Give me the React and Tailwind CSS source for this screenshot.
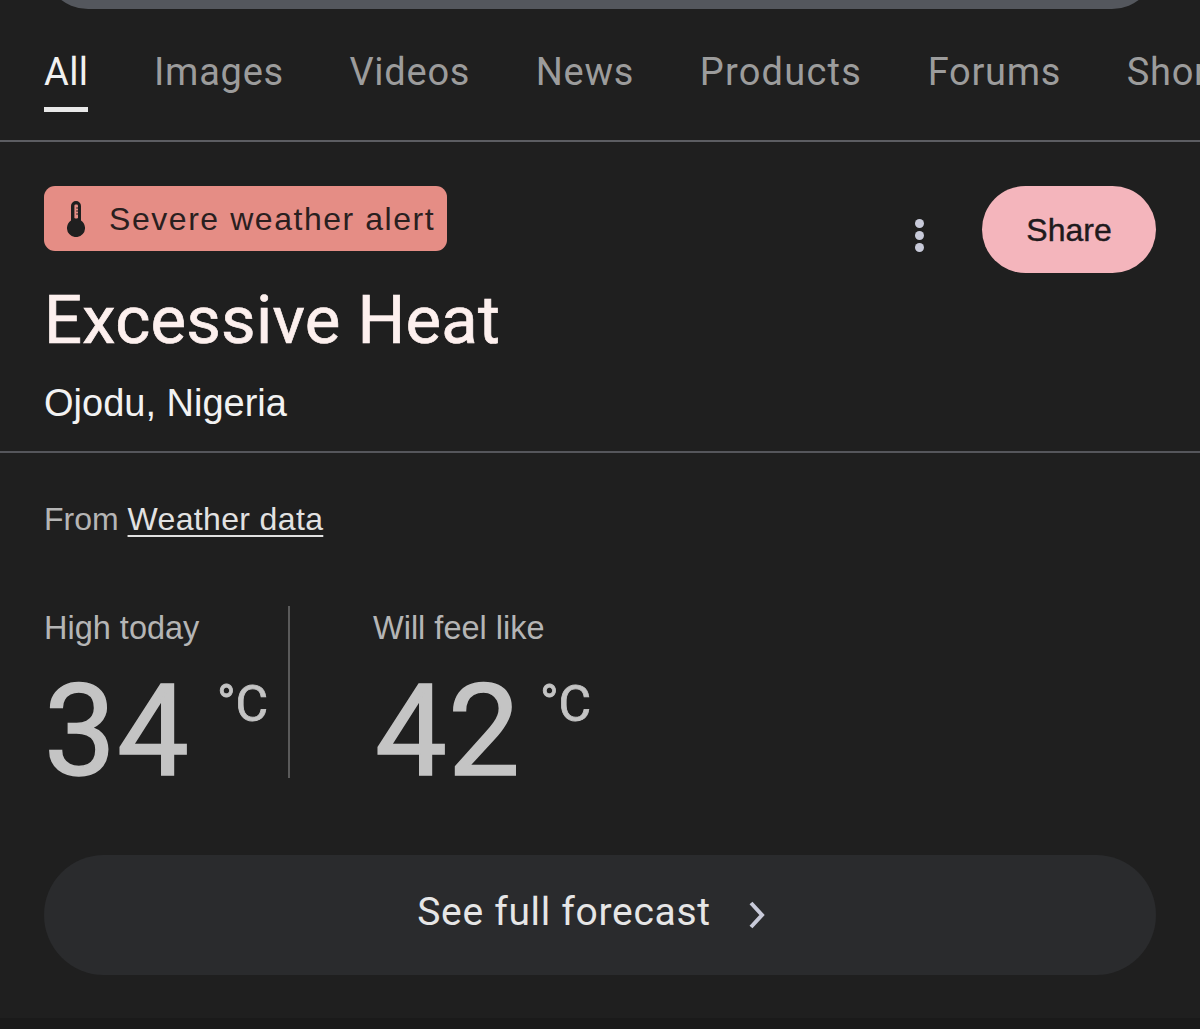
import React from 'react';

const TABS = ['Images', 'Videos', 'News', 'Products', 'Forums', 'Short videos'];

function Thermometer() {
  return (
    <svg width="18" height="36" viewBox="0 0 18 36" aria-hidden>
      <path fill="#1f1f1f" d="M4 5a5 5 0 0 1 10 0v14.6a9 9 0 1 1-10 0z" />
      <rect x="7.4" y="3.5" width="3.6" height="14" rx="1.2" fill="#e58d85" />
      <path stroke="#1f1f1f" strokeWidth="1" d="M9.2 7h2M9.2 10h2M9.2 13h2" />
    </svg>
  );
}

function Reading({ label, value, className, valueClass, unitClass }) {
  return (
    <div className={className}>
      <div className="text-[32.5px] leading-[44px] text-[#b5b5b5] font-['Liberation_Sans',sans-serif]">{label}</div>
      <div className={`flex items-start mt-[16px] text-[#c4c4c4] font-['Roboto',sans-serif] ${valueClass}`}>
        <span className="text-[128px] leading-[130px] tracking-[1px] [-webkit-text-stroke:1.6px_#c4c4c4]">{value}</span>
        <span className={`text-[50px] leading-[50px] mt-[13px] [-webkit-text-stroke:0.8px_#c4c4c4] ${unitClass}`}>°C</span>
      </div>
    </div>
  );
}

export default function App() {
  return (
    <div className="w-[1200px] h-[1029px] overflow-hidden bg-[#1f1f1f] flex flex-col font-['Roboto',sans-serif]">
      <div className="mx-[44px] h-[88px] -mt-[79px] shrink-0 bg-[#54575d] rounded-b-[44px]" />

      <nav className="h-[131px] shrink-0 flex gap-[65.5px] pl-[44px] whitespace-nowrap overflow-hidden border-b-2 border-[#5c5d62] box-content tracking-[0.75px]">
        <div className="h-[103px] pt-[37px] border-b-[5px] border-[#e8e8e8] text-[38px] leading-[52px] text-[#f1f1f1] tracking-[0.4px]">All</div>
        {TABS.map((t) => (
          <div key={t} className={t === 'Products' ? 'pt-[37px] text-[38px] leading-[52px] text-[#9c9c9c] tracking-[1.25px]' : 'pt-[37px] text-[38px] leading-[52px] text-[#9c9c9c]'}>{t}</div>
        ))}
      </nav>

      <section className="h-[311px] shrink-0 px-[44px] pt-[44px] border-b-2 border-[#55565b] flex flex-col">
        <div className="flex justify-between items-start">
          <div className="h-[65px] w-[403px] bg-[#e58d85] rounded-[11px] flex items-center pl-[23px] gap-[24px]">
            <Thermometer />
            <span className="text-[32px] tracking-[1.55px] text-[#2a1f1f] font-['Liberation_Sans',sans-serif] whitespace-nowrap">Severe weather alert</span>
          </div>
          <div className="flex items-center gap-[58px]">
            <div className="flex flex-col gap-[3px] mt-[11px]">
              <span className="w-[9px] h-[9px] rounded-full bg-[#c8cad9]" />
              <span className="w-[9px] h-[9px] rounded-full bg-[#c8cad9]" />
              <span className="w-[9px] h-[9px] rounded-full bg-[#c8cad9]" />
            </div>
            <div className="w-[174px] h-[87px] rounded-full bg-[#f4b5bc] flex items-center justify-center text-[32px] text-[#201a1c] font-['Liberation_Sans',sans-serif] [-webkit-text-stroke:0.4px_#201a1c]">Share</div>
          </div>
        </div>
        <h1 className="mt-[7px] text-[67px] leading-[80px] text-[#fdf0ee] tracking-[0.25px] [-webkit-text-stroke:0.7px_#fdf0ee]">Excessive Heat</h1>
        <p className="mt-[19px] text-[38px] leading-[48px] text-[#f2f2f2] font-['Liberation_Sans',sans-serif]">Ojodu, Nigeria</p>
      </section>

      <section className="flex-1 px-[44px] pt-[46px] flex flex-col">
        <p className="text-[32px] leading-[40px] text-[#b5b5b5] font-['Liberation_Sans',sans-serif]">
          From <span className="text-[#e2e2e2] underline underline-offset-[5px] decoration-2 tracking-[0.35px]">Weather data</span>
        </p>
        <div className="mt-[67px] flex h-[172px]">
          <Reading label="High today" value="34" className="w-[246px] border-r-2 border-[#5a5a5a]" valueClass="ml-0" unitClass="ml-[27px]" />
          <Reading label="Will feel like" value="42" className="ml-[83px]" valueClass="ml-[2px]" unitClass="ml-[19px]" />
        </div>
        <button className="mt-[77px] h-[120px] rounded-full bg-[#2a2b2d] flex items-center justify-center gap-[34px] pr-[14px] pb-[5px] text-[39px] tracking-[0.7px] text-[#e6e6e6]">
          See full forecast
          <svg width="24" height="34" viewBox="0 0 24 34" fill="none" stroke="#c8cad9" strokeWidth="4" className="mt-[5px]" aria-hidden>
            <path d="M6 5l11 12L6 29" />
          </svg>
        </button>
      </section>
      <div className="h-[11px] shrink-0 bg-[#1a1a1a]" />
    </div>
  );
}
